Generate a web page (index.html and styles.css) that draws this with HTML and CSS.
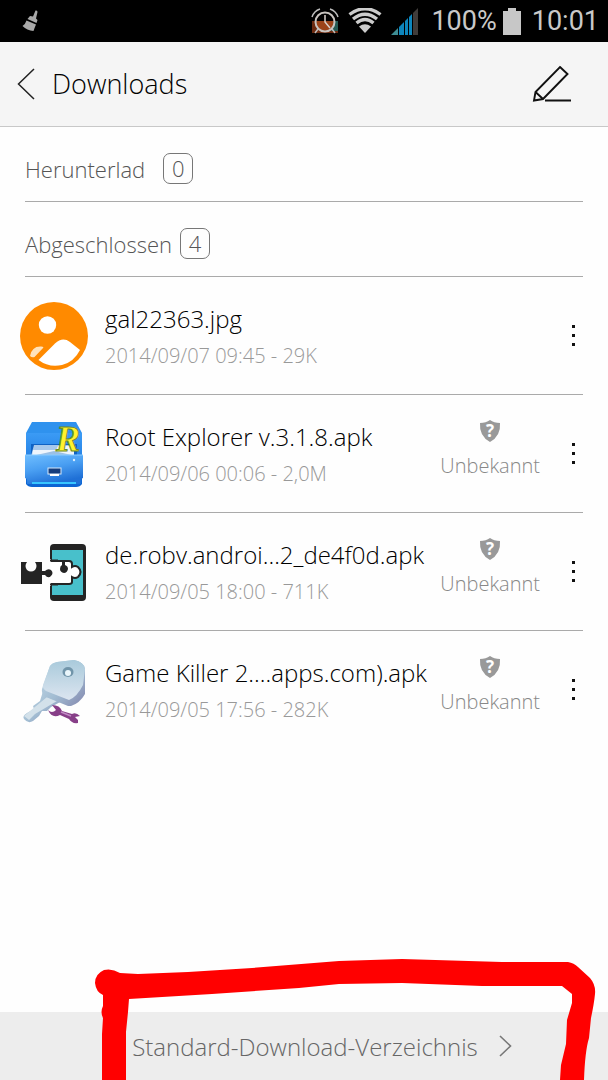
FILE: index.html
```html
<!DOCTYPE html>
<html lang="de">
<head>
<meta charset="utf-8">
<meta name="viewport" content="width=device-width, initial-scale=1">
<title>Downloads</title>
<link rel="stylesheet" href="styles.css">
</head>
<body>
<div class="screen">
  <div class="status">
    <svg class="status-broom" width="18" height="24" viewBox="0 0 18 24" fill="#a9a9a9"><path d="M13.5 1.5Q15.500 1 15.500 3L14 9.500L15.500 11L14.500 14L5.500 10L8 7L11 7.500Z"/><path d="M4.500 11.500L14 15.500Q12.500 19 11.500 22Q5 21.500 .5 17Q3.500 15 4.500 11.500Z"/></svg>
    <div class="status-right">
      <svg class="alarm" width="28" height="26" viewBox="0 0 28 26" fill="none"><path d="M1 13H27V25H1Z" fill="#6b2a10"/><path d="M20 13H27V23H20Z" fill="#255b54"/><path d="M14 13H23Q22 22 14 23Q5 22 5 13Z" fill="#9c4318"/><circle cx="14" cy="14" r="9.500" stroke="#c9c4c0" stroke-width="2"/><path d="M14 7V14L19 20" stroke="#d9d0ca" stroke-width="1.500"/><path d="M1 9Q3 3 9 1M19 1Q25 3 27 9M7 21L4 25M21 21L24 25" stroke="#bdbdbd" stroke-width="1.500"/></svg>
      <svg class="wifi" width="34" height="26" viewBox="0 0 34 26" fill="none"><path d="M17 25L11 18.500Q17 14 23 18.500Z" fill="#ccc"/><path d="M1.500 6.500Q17-5 32.500 6.500M5 11Q17 1.500 29 11M8.500 15Q17 8 25.500 15" stroke="#ccc" stroke-width="3.400"/></svg>
      <svg class="signal" width="28" height="27" viewBox="0 0 28 27"><path d="M0 27L7 20V27Z" fill="#3f8d93"/><path d="M8 19L13 14V27H8Z" fill="#0d86bd"/><path d="M14 13L17 10V27H14Z" fill="#0d86bd"/><path d="M18 9L21 6V27H18Z" fill="#0d86bd"/><path d="M22 5L27 0V27H22Z" fill="#403c3a"/></svg>
      <span class="percent">100%</span>
      <svg class="battery" width="18" height="27" viewBox="0 0 18 27" fill="#c7c7c7"><path d="M5 0H13V3H18V27H0V3H5Z"/></svg>
      <span>10:01</span>
    </div>
  </div>

  <header class="header">
    <a class="back" href="#" aria-label="Zurück"><svg width="18" height="32" viewBox="0 0 18 32" fill="none" stroke="#222" stroke-width="1.500"><path d="M17 1L1.500 16L17 31"/></svg></a>
    <h1 class="title">Downloads</h1>
    <button class="edit" type="button" aria-label="Bearbeiten"><svg width="40" height="38" viewBox="0 0 40 38" fill="none" stroke="#111" stroke-width="1.900"><path d="M28 2L35.500 9L11 34L2 35.500L3.500 27ZM3.500 27L11 34M13 35.500H39"/></svg></button>
  </header>

  <main class="content">
    <h2 class="section"><span class="section-name wide">Herunterlad</span><span class="count">0</span></h2>
    <h2 class="section"><span class="section-name">Abgeschlossen</span><span class="count">4</span></h2>
    <ul class="list">
      <li class="item">
        <svg class="icon" width="72" height="72" viewBox="0 0 72 72"><circle cx="36" cy="36" r="34" fill="#ff8a00"/><circle cx="29.500" cy="25" r="8.700" fill="#fff"/><path d="M12 56Q14 46 23 46.500Q25 46.500 25.500 47.500L16.500 57Q14 58 12 56Z" fill="#ffe2bb"/><path d="M20.500 60L37 43.500Q44.500 36.500 52 42L62 50Q56 62 44 65Q31 68 20.500 60Z" fill="#fff"/></svg>
        <div class="info"><div class="name">gal22363.jpg</div><div class="meta">2014/09/07 09:45 - 29K</div></div>
        <button class="more" type="button" aria-label="Mehr"><i></i><i></i><i></i></button>
      </li>
      <li class="item">
        <svg class="icon" width="72" height="72" viewBox="0 0 72 72">
          <defs><linearGradient id="cab" x1="0" y1="0" x2=".4" y2="1"><stop offset="0" stop-color="#6fbeff"/><stop offset=".5" stop-color="#4a9ff2"/><stop offset="1" stop-color="#1f70d6"/></linearGradient><linearGradient id="lid" x1="0" y1="0" x2="0" y2="1"><stop offset="0" stop-color="#3b9bf5"/><stop offset="1" stop-color="#0a63d2"/></linearGradient></defs>
          <path d="M14 4H58L64 15H8Z" fill="#2f92ee"/><path d="M8 15H64V66Q62 69 58 69H14Q10 69 8 66Z" fill="url(#lid)"/><path d="M13 26H59V39H13Z" fill="#0f62c4"/><path d="M16 27H56V38H13Z" fill="#a8c9ec"/><path d="M15 32H38L40 28H56V38H14Z" fill="#eef5fc"/><path d="M14 38L36 33L58 38Z" fill="#9bc0e5"/><path d="M7 37H65V60L63 61V66H9V61L7 60Z" fill="url(#cab)"/><path d="M7 37H65" stroke="#8accff"/><path d="M14 65H58" stroke="#38c5ff" stroke-width="2"/><rect x="30" y="50" width="13" height="6" fill="#163d7c" stroke="#d6e9fb"/><path d="M32 56H41V58H32Z" fill="#fff"/><circle cx="56" cy="42" r="1.200" fill="#d8edff"/>
          <text x="38" y="33" class="logo-r">R</text>
        </svg>
        <div class="info"><div class="name">Root Explorer v.3.1.8.apk</div><div class="meta">2014/09/06 00:06 - 2,0M</div></div>
        <div class="trust"><svg width="22" height="24" viewBox="0 0 22 24"><path d="M11 1Q15 4 21 4Q22 17 11 23Q0 17 1 4Q7 4 11 1Z" fill="#999"/><text x="11" y="18" class="shield-mark">?</text></svg><span>Unbekannt</span></div>
        <button class="more" type="button" aria-label="Mehr"><i></i><i></i><i></i></button>
      </li>
      <li class="item">
        <svg class="icon" width="72" height="72" viewBox="0 0 72 72">
          <rect x="32" y="8" width="36" height="57" rx="4" fill="#242424"/><path d="M34 14H65V59H34Z" fill="#48c0cb"/>
          <path d="M30 25H51Q54 25 54 28V31Q57 29 60 31Q65 36 60 41Q57 43 54 41V46Q54 48 51 48H30Z" fill="#fff" stroke="#242424" stroke-width="2"/><path d="M28 23H33V50H28Z" fill="#fefefe"/><path d="M32 24.500H40M32 48.500H40" stroke="#242424" stroke-width="2"/>
          <path d="M44 25H47V29Q50 30 50 33Q49 37 46 37Q42 36 42 33Q42 30 44 29Z" fill="#242424"/>
          <path d="M3 26H9Q6 30 9 34Q13 37 17 34Q20 30 17 26H24V35H27Q30 32 33 34Q36 37 33 40Q30 43 27 39H24V48H3Z" fill="#242424"/>
        </svg>
        <div class="info"><div class="name">de.robv.androi…2_de4f0d.apk</div><div class="meta">2014/09/05 18:00 - 711K</div></div>
        <div class="trust"><svg width="22" height="24" viewBox="0 0 22 24"><path d="M11 1Q15 4 21 4Q22 17 11 23Q0 17 1 4Q7 4 11 1Z" fill="#999"/><text x="11" y="18" class="shield-mark">?</text></svg><span>Unbekannt</span></div>
        <button class="more" type="button" aria-label="Mehr"><i></i><i></i><i></i></button>
      </li>
      <li class="item">
        <svg class="icon" width="72" height="72" viewBox="0 0 72 72">
          <defs><linearGradient id="key" x1="0" y1="0" x2="1" y2="1"><stop offset="0" stop-color="#c4dce9"/><stop offset=".55" stop-color="#a2bcd2"/><stop offset="1" stop-color="#8387ae"/></linearGradient><linearGradient id="face" x1="0" y1="0" x2="0" y2="1"><stop offset="0" stop-color="#a9cadb"/><stop offset="1" stop-color="#dce5f0"/></linearGradient></defs>
          <path d="M26 34L44 47L33 53L29 57L24 57L21 62L15 67Q10 70 6 65Q4 62 9 59L16 55L15 52L22 47Z" fill="url(#key)"/><path d="M6 62L29 43L39 47L17 60L11 66Z" fill="#d3e1ea"/>
          <path d="M32 12Q34 9 39 8L56 6Q66 8 67 15V40Q62 49 53 52L50 52L28 43Q23 40 24 35Z" fill="url(#key)"/><path d="M32 12Q34 9 39 8L56 6Q66 8 67 15L65 31Q59 43 51 46L28 37Q24 34 25 31Z" fill="url(#face)"/>
          <ellipse cx="50" cy="18" rx="5.500" ry="5" fill="#7195aa"/><ellipse cx="50" cy="19" rx="3" ry="3" fill="#eaf6fb"/>
          <path d="M30 56Q34 60 38 56L34 51Q42 51 44 57L54 60Q58 58 62 62L57 63L60 66L60 69Q54 70 51 65L42 61Q34 65 30 56Z" fill="#873f88"/><path d="M43 58L53 62" stroke="#c18bc5" stroke-width="1.500"/>
        </svg>
        <div class="info"><div class="name">Game Killer 2.…apps.com).apk</div><div class="meta">2014/09/05 17:56 - 282K</div></div>
        <div class="trust"><svg width="22" height="24" viewBox="0 0 22 24"><path d="M11 1Q15 4 21 4Q22 17 11 23Q0 17 1 4Q7 4 11 1Z" fill="#999"/><text x="11" y="18" class="shield-mark">?</text></svg><span>Unbekannt</span></div>
        <button class="more" type="button" aria-label="Mehr"><i></i><i></i><i></i></button>
      </li>
    </ul>
  </main>

  <footer class="footer">
    <a class="directory" href="#">Standard-Download-Verzeichnis<svg width="14" height="22" viewBox="0 0 14 22" fill="none" stroke="#777" stroke-width="1.600"><path d="M2 1L12.500 11L2 21"/></svg></a>
    <svg class="marker" width="504" height="124" viewBox="0 0 504 124"><path fill="#f00" d="M12 14Q20 12 28 17L46 18L96 16L160 12L247 5L310 3L410 6L476 6Q482 7 486 11L498 22Q504 29 503 38Q502 48 499 62L497 82Q493 95 492 124H468L469 109L474 88L475 64L480 47V38L470 30L390 30L310 27L247 28L207 32L120 38L37 43L36 56L34 76L34 124H10V78L11 62Q8 56 11 50V39Q4 36 3 27Q3 18 12 14Z"/></svg>
  </footer>
</div>
</body>
</html>
```
FILE: styles.css
```css
* { box-sizing: border-box; }
body {
  margin: 0;
  background: #fefefe;
  color: #000;
  font-family: "Open Sans", "Noto Sans", sans-serif;
  font-weight: 300;
}
svg { display: block; flex: none; }
button { padding: 0; border: 0; background: none; }
.screen { display: flex; flex-direction: column; min-height: 100vh; overflow: hidden; }

.status {
  display: flex;
  justify-content: space-between;
  align-items: center;
  height: 42px;
  padding: 0 9px 0 22px;
  background: #000;
  color: #c9c9c9;
  font: 400 27px/44px Roboto, sans-serif;
}
.status-right { display: flex; align-items: center; }
.alarm { margin-right: 9px; }
.wifi { margin-right: 9px; }
.signal { margin-right: 12px; }
.percent { margin-right: 6px; }
.battery { margin-right: 11px; }

.header {
  display: flex;
  align-items: center;
  height: 85px;
  padding: 0 36px 0 17px;
  background: #f5f5f5;
  border-bottom: 1px solid #c8c8c8;
}
.title { flex: 1; margin: 0 0 0 17px; font-size: 27px; line-height: 40px; font-weight: 300; }

.content { flex: 1; }
.section {
  display: flex;
  align-items: flex-end;
  gap: 8px;
  height: 75px;
  margin: 0 25px;
  padding-bottom: 17px;
  border-bottom: 1px solid #aaa;
  color: #555;
  font-size: 22px;
  line-height: 30px;
  font-weight: 300;
}
.wide { margin-right: 10px; }
.count {
  width: 30px;
  border: 1px solid #777;
  border-radius: 7px;
  line-height: 29px;
  text-align: center;
}

.list { margin: 0 25px; padding: 0; list-style: none; }
.item { display: flex; align-items: center; height: 118px; border-bottom: 1px solid #aaa; }
.item:last-child { border-bottom-color: transparent; }
.icon { margin-left: -7px; overflow: visible; }
.info { flex: 1; min-width: 0; margin-left: 15px; padding-top: 2px; white-space: nowrap; }
.name { font-size: 24px; line-height: 38px; }
.meta { color: #999; font-size: 20px; line-height: 36px; }
.trust {
  display: flex;
  flex-direction: column;
  align-items: center;
  margin-right: 24px;
  padding-bottom: 7px;
  color: #888;
  font-size: 20px;
  line-height: 30px;
}
.trust svg { margin-bottom: 8px; }
.more { display: flex; flex-direction: column; align-items: center; gap: 6px; width: 19px; }
.more i { width: 3px; height: 3px; background: #111; }
.logo-r { fill: #fff22e; stroke: #6b8a25; stroke-width: 1px; font: italic 700 36px/1 "Liberation Serif", serif; }
.shield-mark { fill: #fff; font: 700 17px "Open Sans", sans-serif; text-anchor: middle; }

.footer { position: relative; display: flex; height: 68px; background: #ededed; justify-content: center; }
.directory {
  display: flex;
  align-items: center;
  gap: 20px;
  margin-left: 36px;
  color: #666;
  font-size: 24px;
  text-decoration: none;
}
.marker { position: absolute; right: 12px; bottom: 0; pointer-events: none; }
```
